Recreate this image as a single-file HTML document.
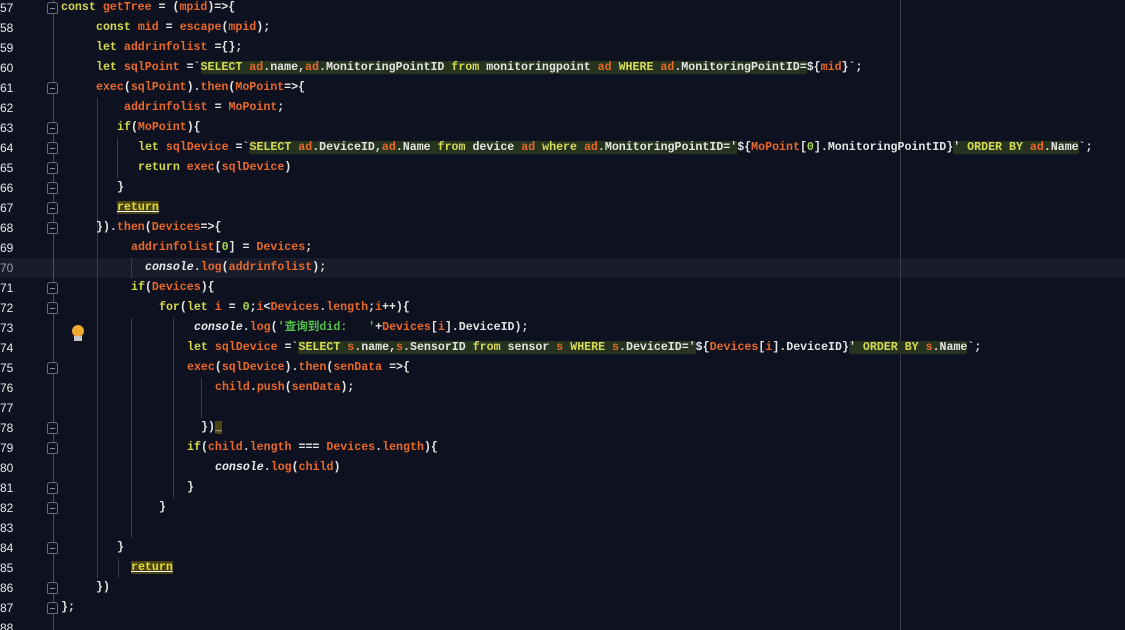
<!DOCTYPE html>
<html style="height:630px;overflow:hidden"><head><meta charset="utf-8"><style>
body{margin:0;width:1125px;height:630px;background:#0e1120;overflow:hidden;position:relative;font-family:"Liberation Mono","Noto Sans CJK SC",monospace;font-size:11.62px;font-weight:bold;color:#e4e4e4}
.l{position:absolute;height:20px;line-height:20px;white-space:pre}
.n{position:absolute;left:0;height:20px;line-height:20px;font-family:"Liberation Sans",sans-serif;font-size:12px;font-weight:normal;color:#e8e8e8}
.k{color:#d3d94c}.v{color:#e8692a}.g{color:#52c24a}.s{background:#26331f;color:#e4e4e4}.sk{color:#d6da55}.num{color:#a8d84a}
.i{font-style:italic;color:#eaeaea}
.gd{position:absolute;width:1px;background:#3a3d48}
.f{position:absolute;left:47px;width:11px;height:12px;box-sizing:border-box;border:1px solid #6a6d78;border-radius:3px 3px 1px 1px;background:#0e1120}
.f:after{content:"";position:absolute;left:2px;top:5px;width:5px;height:1px;background:#8a8d98}
.r{background:#4a4312;color:#e0dc3a;text-decoration:underline;text-decoration-color:#fff}
</style></head><body>
<div style="position:absolute;left:0;top:258px;width:1125px;height:20px;background:#191d2b"></div>
<div style="position:absolute;left:900px;top:0;width:1px;height:630px;background:#3a3d48"></div>
<div class="gd" style="left:53px;top:0;height:630px;background:#4a4d58"></div>
<div class="gd" style="left:97px;top:98px;height:480px"></div>
<div class="gd" style="left:117px;top:138px;height:40px"></div>
<div class="gd" style="left:131px;top:318px;height:220px"></div>
<div class="gd" style="left:173px;top:318px;height:180px"></div>
<div class="gd" style="left:201px;top:378px;height:40px"></div>
<div class="gd" style="left:118px;top:558px;height:20px"></div>
<div class="gd" style="left:131px;top:258px;height:20px"></div>
<div class="n" style="top:-2px">57</div><div class="n" style="top:18px">58</div><div class="n" style="top:38px">59</div><div class="n" style="top:58px">60</div><div class="n" style="top:78px">61</div><div class="n" style="top:98px">62</div><div class="n" style="top:118px">63</div><div class="n" style="top:138px">64</div><div class="n" style="top:158px">65</div><div class="n" style="top:178px">66</div><div class="n" style="top:198px">67</div><div class="n" style="top:218px">68</div><div class="n" style="top:238px">69</div><div class="n" style="top:258px;color:#9a9ca4">70</div><div class="n" style="top:278px">71</div><div class="n" style="top:298px">72</div><div class="n" style="top:318px">73</div><div class="n" style="top:338px">74</div><div class="n" style="top:358px">75</div><div class="n" style="top:378px">76</div><div class="n" style="top:398px">77</div><div class="n" style="top:418px">78</div><div class="n" style="top:438px">79</div><div class="n" style="top:458px">80</div><div class="n" style="top:478px">81</div><div class="n" style="top:498px">82</div><div class="n" style="top:518px">83</div><div class="n" style="top:538px">84</div><div class="n" style="top:558px">85</div><div class="n" style="top:578px">86</div><div class="n" style="top:598px">87</div><div class="n" style="top:618px">88</div>
<div class="f" style="top:2px"></div><div class="f" style="top:82px"></div><div class="f" style="top:122px"></div><div class="f" style="top:142px"></div><div class="f" style="top:162px"></div><div class="f" style="top:182px"></div><div class="f" style="top:202px"></div><div class="f" style="top:222px"></div><div class="f" style="top:282px"></div><div class="f" style="top:302px"></div><div class="f" style="top:362px"></div><div class="f" style="top:422px"></div><div class="f" style="top:442px"></div><div class="f" style="top:482px"></div><div class="f" style="top:502px"></div><div class="f" style="top:542px"></div><div class="f" style="top:582px"></div><div class="f" style="top:602px"></div>
<div style="position:absolute;left:72px;top:325px;width:12px;height:12px;border-radius:50%;background:#f0a830"></div>
<div style="position:absolute;left:74px;top:336px;width:8px;height:5px;background:#c8c8c8"></div>
<div class="l" style="left:61px;top:-2px"><span class="k">const</span> <span class="v">getTree</span> = (<span class="v">mpid</span>)=&gt;{</div>
<div class="l" style="left:96px;top:18px"><span class="k">const</span> <span class="v">mid</span> = <span class="v">escape</span>(<span class="v">mpid</span>);</div>
<div class="l" style="left:96px;top:38px"><span class="k">let</span> <span class="v">addrinfolist</span> ={};</div>
<div class="l" style="left:96px;top:58px"><span class="k">let</span> <span class="v">sqlPoint</span> =`<span class="s"><span class="sk">SELECT</span> <span class="v">ad</span>.name,<span class="v">ad</span>.MonitoringPointID <span class="sk">from</span> monitoringpoint <span class="v">ad</span> <span class="sk">WHERE</span> <span class="v">ad</span>.MonitoringPointID=</span>${<span class="v">mid</span>}`;</div>
<div class="l" style="left:96px;top:78px"><span class="v">exec</span>(<span class="v">sqlPoint</span>).<span class="v">then</span>(<span class="v">MoPoint</span>=&gt;{</div>
<div class="l" style="left:124px;top:98px"><span class="v">addrinfolist</span> = <span class="v">MoPoint</span>;</div>
<div class="l" style="left:117px;top:118px"><span class="k">if</span>(<span class="v">MoPoint</span>){</div>
<div class="l" style="left:138px;top:138px"><span class="k">let</span> <span class="v">sqlDevice</span> =`<span class="s"><span class="sk">SELECT</span> <span class="v">ad</span>.DeviceID,<span class="v">ad</span>.Name <span class="sk">from</span> device <span class="v">ad</span> <span class="sk">where</span> <span class="v">ad</span>.MonitoringPointID='</span>${<span class="v">MoPoint</span>[<span class="num">0</span>].MonitoringPointID}<span class="s">' <span class="sk">ORDER BY</span> <span class="v">ad</span>.Name</span>`;</div>
<div class="l" style="left:138px;top:158px"><span class="k">return</span> <span class="v">exec</span>(<span class="v">sqlDevice</span>)</div>
<div class="l" style="left:117px;top:178px">}</div>
<div class="l" style="left:117px;top:198px"><span class="r">return</span></div>
<div class="l" style="left:96px;top:218px">}).<span class="v">then</span>(<span class="v">Devices</span>=&gt;{</div>
<div class="l" style="left:131px;top:238px"><span class="v">addrinfolist</span>[<span class="num">0</span>] = <span class="v">Devices</span>;</div>
<div class="l" style="left:145px;top:258px"><span class="i">console</span>.<span class="v">log</span>(<span class="v">addrinfolist</span>);</div>
<div class="l" style="left:131px;top:278px"><span class="k">if</span>(<span class="v">Devices</span>){</div>
<div class="l" style="left:159px;top:298px"><span class="k">for</span>(<span class="k">let</span> <span class="v">i</span> = <span class="num">0</span>;<span class="v">i</span>&lt;<span class="v">Devices</span>.<span class="v">length</span>;<span class="v">i</span>++){</div>
<div class="l" style="left:194px;top:318px"><span class="i">console</span>.<span class="v">log</span>(<span class="g">'查询到did:   '</span>+<span class="v">Devices</span>[<span class="v">i</span>].DeviceID);</div>
<div class="l" style="left:187px;top:338px"><span class="k">let</span> <span class="v">sqlDevice</span> =`<span class="s"><span class="sk">SELECT</span> <span class="v">s</span>.name,<span class="v">s</span>.SensorID <span class="sk">from</span> sensor <span class="v">s</span> <span class="sk">WHERE</span> <span class="v">s</span>.DeviceID='</span>${<span class="v">Devices</span>[<span class="v">i</span>].DeviceID}<span class="s">' <span class="sk">ORDER BY</span> <span class="v">s</span>.Name</span>`;</div>
<div class="l" style="left:187px;top:358px"><span class="v">exec</span>(<span class="v">sqlDevice</span>).<span class="v">then</span>(<span class="v">senData</span> =&gt;{</div>
<div class="l" style="left:215px;top:378px"><span class="v">child</span>.<span class="v">push</span>(<span class="v">senData</span>);</div>
<div class="l" style="left:201px;top:418px">})<span style="background:#4a4312">_</span></div>
<div class="l" style="left:187px;top:438px"><span class="k">if</span>(<span class="v">child</span>.<span class="v">length</span> === <span class="v">Devices</span>.<span class="v">length</span>){</div>
<div class="l" style="left:215px;top:458px"><span class="i">console</span>.<span class="v">log</span>(<span class="v">child</span>)</div>
<div class="l" style="left:187px;top:478px">}</div>
<div class="l" style="left:159px;top:498px">}</div>
<div class="l" style="left:117px;top:538px">}</div>
<div class="l" style="left:131px;top:558px"><span class="r">return</span></div>
<div class="l" style="left:96px;top:578px">})</div>
<div class="l" style="left:61px;top:598px">};</div>
</body></html>
